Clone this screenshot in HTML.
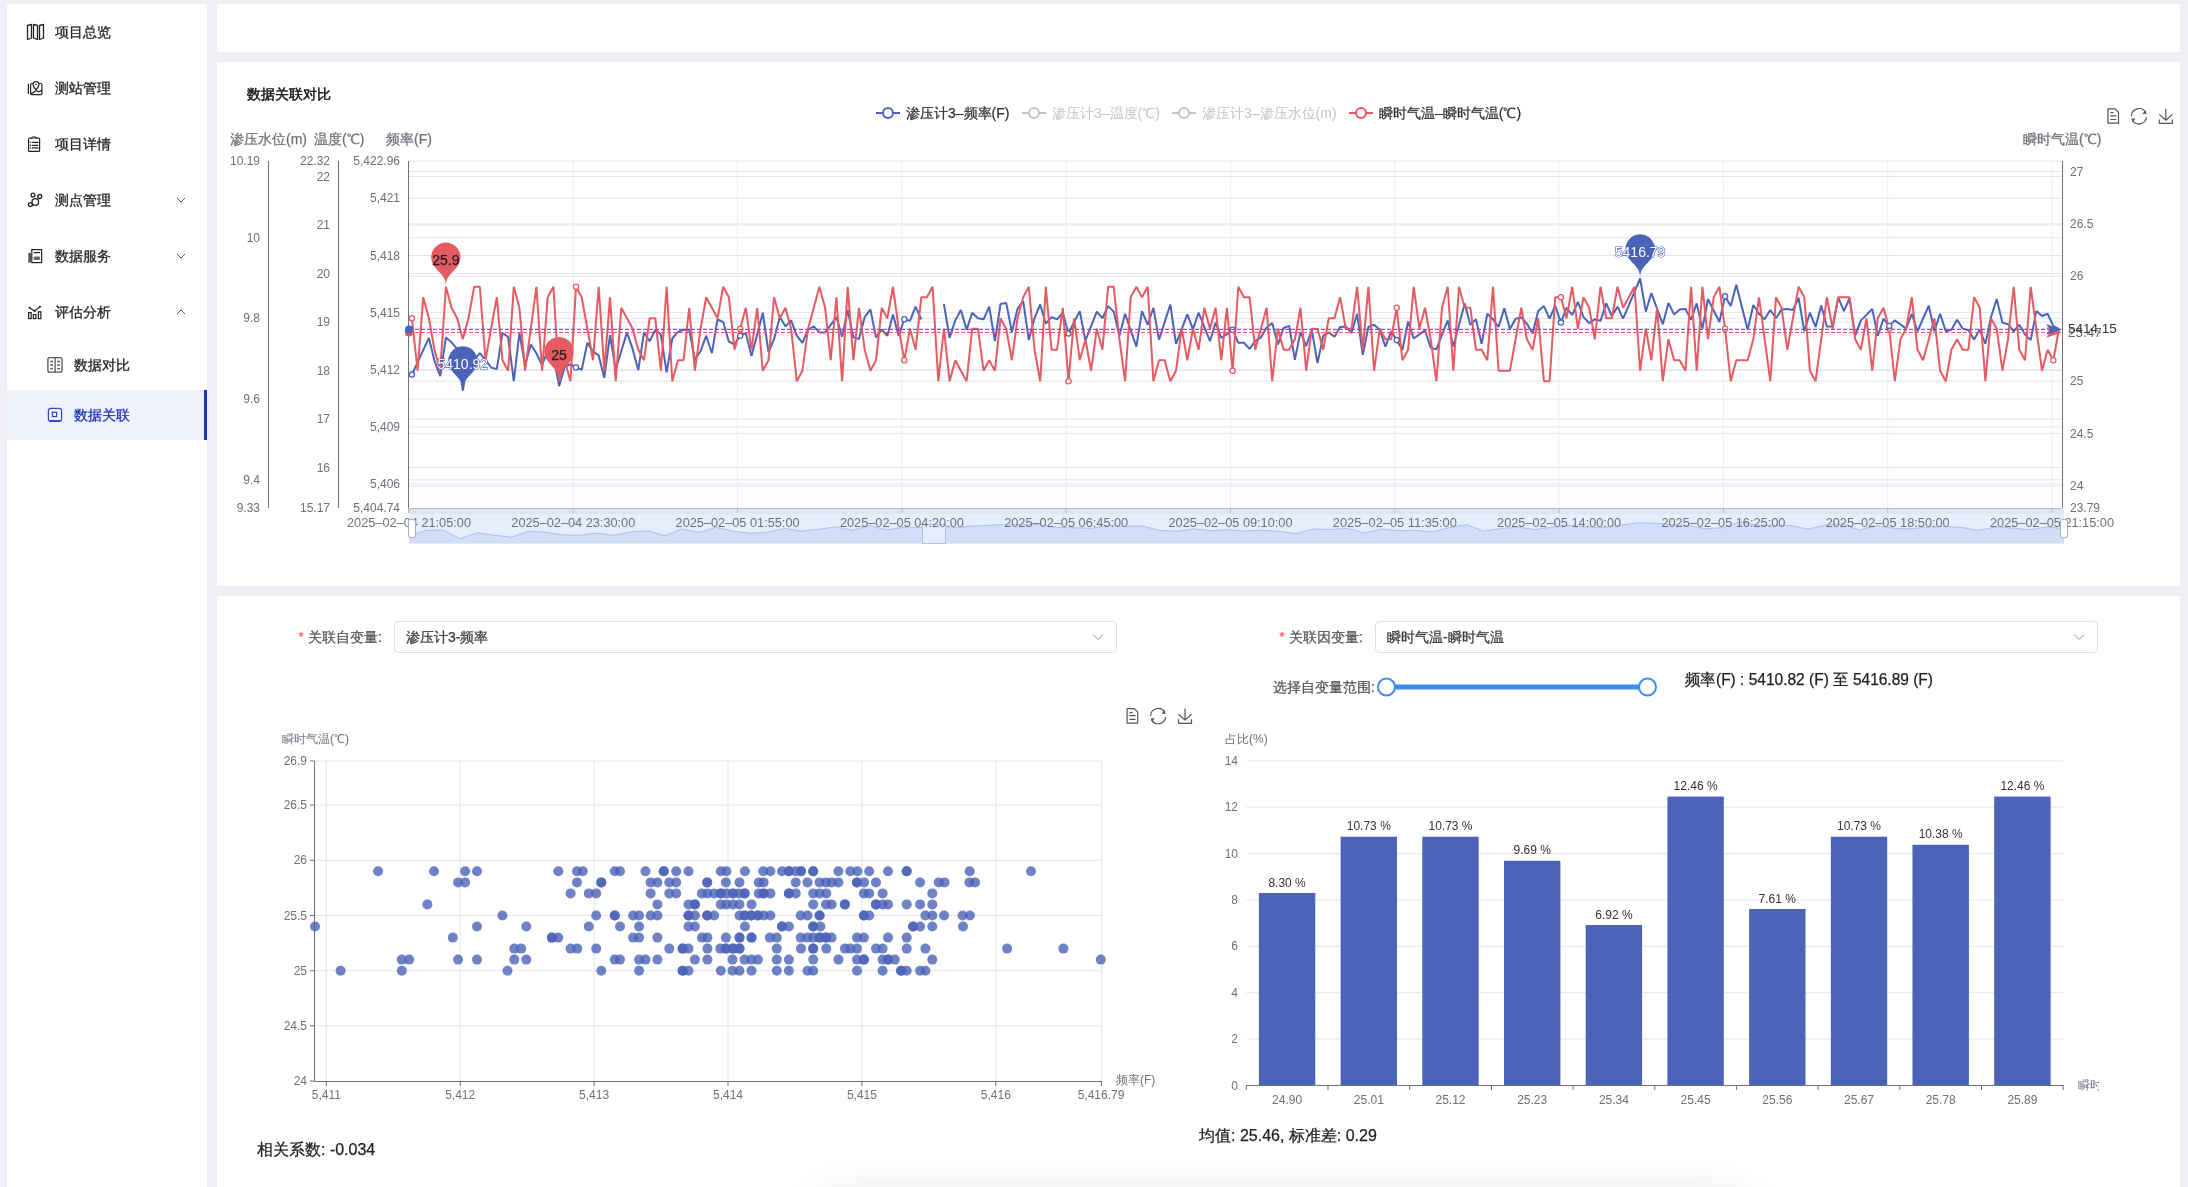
<!DOCTYPE html>
<html><head><meta charset="utf-8"><title>数据关联</title>
<style>
html,body{margin:0;padding:0}
body{width:2188px;height:1187px;overflow:hidden;background:#eef0f4;font-family:"Liberation Sans", sans-serif;position:relative}
svg{position:absolute;left:0;top:0;font-family:"Liberation Sans", sans-serif;will-change:transform}
</style></head><body>
<svg width="2188" height="1187" viewBox="0 0 2188 1187">
<rect x="7" y="4" width="200" height="1183" fill="#fff"/>
<rect x="217" y="4" width="1963" height="48" fill="#fff"/>
<rect x="217" y="62" width="1963" height="524" fill="#fff"/>
<rect x="217" y="596" width="1963" height="591" fill="#fff"/>
<rect x="7" y="390" width="200" height="50" fill="#eef2fd"/>
<rect x="204" y="390" width="3" height="50" fill="#1f33b0"/>
<text x="55.0" y="32.0" font-size="14" fill="#262626" text-anchor="start" dominant-baseline="central" stroke="#262626" stroke-width="0.3">项目总览</text>
<text x="55.0" y="88.0" font-size="14" fill="#262626" text-anchor="start" dominant-baseline="central" stroke="#262626" stroke-width="0.3">测站管理</text>
<text x="55.0" y="144.0" font-size="14" fill="#262626" text-anchor="start" dominant-baseline="central" stroke="#262626" stroke-width="0.3">项目详情</text>
<text x="55.0" y="200.0" font-size="14" fill="#262626" text-anchor="start" dominant-baseline="central" stroke="#262626" stroke-width="0.3">测点管理</text>
<path d="M177 198 L181 202 L185 198" fill="none" stroke="#555" stroke-width="1"/>
<text x="55.0" y="256.0" font-size="14" fill="#262626" text-anchor="start" dominant-baseline="central" stroke="#262626" stroke-width="0.3">数据服务</text>
<path d="M177 254 L181 258 L185 254" fill="none" stroke="#555" stroke-width="1"/>
<text x="55.0" y="312.0" font-size="14" fill="#262626" text-anchor="start" dominant-baseline="central" stroke="#262626" stroke-width="0.3">评估分析</text>
<path d="M177 314 L181 310 L185 314" fill="none" stroke="#555" stroke-width="1"/>
<text x="74.0" y="365.0" font-size="14" fill="#262626" text-anchor="start" dominant-baseline="central" stroke="#262626" stroke-width="0.3">数据对比</text>
<text x="74.0" y="415.0" font-size="14" fill="#1f30b5" text-anchor="start" dominant-baseline="central" stroke="#1f30b5" stroke-width="0.3">数据关联</text>
<g fill="none" stroke="#222" stroke-width="1.3" stroke-linejoin="round"><path d="M27.5 25.5 L31.5 24.5 L31.5 38 L27.5 39.5 Z"/><path d="M33.5 24.5 L37.5 25.5 L37.5 39.5 L33.5 38 Z"/><path d="M39.5 25.5 L43.5 24.5 L43.5 38 L39.5 39.5 Z"/></g>
<g fill="none" stroke="#222" stroke-width="1.2" stroke-linecap="round" stroke-linejoin="round"><path d="M28.4 84 V93.5"/><path d="M33 83.5 H31.8 Q30.6 83.5 30.6 84.7 V93.4 Q30.6 94.6 31.8 94.6 H40.7 Q41.9 94.6 41.9 93.4 V84.7 Q41.9 83.5 40.7 83.5 H39.6"/><path d="M36 89.8 C34.5 88 33 86.4 33 84.6 A3 3 0 0 1 39 84.6 C39 86.4 37.5 88 36 89.8 Z"/><path d="M31.2 93.8 L36.5 90.6 L38.6 92 L41.5 90.2"/></g>
<circle cx="36" cy="84.5" r="0.8" fill="#222"/>
<g fill="none" stroke="#222" stroke-width="1.2" stroke-linecap="round" stroke-linejoin="round"><rect x="28.6" y="138" width="11" height="13.4" rx="1"/><path d="M31 138.3 Q34 135.2 37 138.3"/><path d="M32.5 142.3 H38 M32.5 145.3 H38 M32.5 147.9 H38"/></g>
<g fill="#222"><circle cx="30.5" cy="142.3" r="0.7"/><circle cx="30.5" cy="145.3" r="0.7"/><circle cx="30.5" cy="147.9" r="0.7"/></g>
<g fill="none" stroke="#222" stroke-width="1.3"><circle cx="33" cy="195" r="1.9"/><circle cx="39.7" cy="196.5" r="2"/><circle cx="35.3" cy="202" r="3.3"/><circle cx="30.4" cy="204.6" r="2"/></g>
<g fill="none" stroke="#222" stroke-width="1.2"><rect x="31.8" y="249.6" width="9.8" height="13" /><path d="M33.6 252.6 H40"/></g>
<path d="M28.3 253 H31.8 V262.6 H28.3 Z" fill="#555"/><rect x="33.6" y="256.4" width="6.4" height="3.6" rx="1.2" fill="#666"/>
<g fill="none" stroke="#222" stroke-width="1.2"><rect x="28.6" y="312.6" width="2.6" height="6"/><rect x="33.3" y="314.6" width="2.6" height="4"/><rect x="38.3" y="311.8" width="2.6" height="6.8"/><path d="M29.5 307.8 L34.6 311 L40 306.8"/></g>
<g fill="#222"><circle cx="29.5" cy="307.8" r="1"/><circle cx="34.6" cy="311" r="1"/><circle cx="40" cy="306.8" r="1"/></g>
<g fill="none" stroke="#555" stroke-width="1.3"><rect x="47.9" y="357.6" width="14.2" height="14.6" rx="2"/><path d="M55.1 357.6 V372.2"/><path d="M50.2 361.5 H53 M50.2 365 H53 M50.2 368.7 H53 M57.2 361.5 H60 M57.2 365 H60 M57.2 368.7 H60"/></g>
<g fill="none" stroke="#3447c4" stroke-width="1.2"><rect x="48.4" y="408.3" width="13.2" height="13.2" rx="2.5"/><rect x="52.4" y="412.3" width="4.2" height="4.2"/><path d="M50 420.6 H60"/></g>
<text x="247.0" y="94.0" font-size="14" fill="#111" text-anchor="start" dominant-baseline="central" stroke="#111" stroke-width="0.45">数据关联对比</text>
<line x1="876.0" y1="113.0" x2="900.0" y2="113.0" stroke="#4b63b8" stroke-width="2" />
<circle cx="888" cy="113" r="5" fill="#fff" stroke="#4b63b8" stroke-width="2"/>
<text x="906.0" y="113.0" font-size="14" fill="#333" text-anchor="start" dominant-baseline="central"  stroke="#333" stroke-width="0.25">渗压计3–频率(F)</text>
<line x1="1022.0" y1="113.0" x2="1046.0" y2="113.0" stroke="#c4c4c4" stroke-width="2" />
<circle cx="1034" cy="113" r="5" fill="#fff" stroke="#c4c4c4" stroke-width="2"/>
<text x="1052.0" y="113.0" font-size="14" fill="#c4c4c4" text-anchor="start" dominant-baseline="central" >渗压计3–温度(℃)</text>
<line x1="1172.0" y1="113.0" x2="1196.0" y2="113.0" stroke="#c4c4c4" stroke-width="2" />
<circle cx="1184" cy="113" r="5" fill="#fff" stroke="#c4c4c4" stroke-width="2"/>
<text x="1202.0" y="113.0" font-size="14" fill="#c4c4c4" text-anchor="start" dominant-baseline="central" >渗压计3–渗压水位(m)</text>
<line x1="1349.0" y1="113.0" x2="1373.0" y2="113.0" stroke="#e65a62" stroke-width="2" />
<circle cx="1361" cy="113" r="5" fill="#fff" stroke="#e65a62" stroke-width="2"/>
<text x="1379.0" y="113.0" font-size="14" fill="#333" text-anchor="start" dominant-baseline="central"  stroke="#333" stroke-width="0.25">瞬时气温–瞬时气温(℃)</text>
<g fill="none" stroke="#555" stroke-width="1.2" stroke-linejoin="round"><path d="M2107.9 108.8 H2115.1000000000004 L2118.5 112.2 V123.2 H2107.9 Z"/><path d="M2110.3 112.7 H2113.6000000000004 M2110.3 115.8 H2116.3 M2110.3 119.5 H2116.3"/><path d="M2131.40 116.20 A7.6 7.6 0 0 1 2145.45 112.17"/><path d="M2146.53 117.26 A7.6 7.6 0 0 1 2132.55 120.23"/><path d="M2165.8 108.7 V120.0 M2159.3 114.4 L2165.8 120.2 L2172.3 114.4"/><path d="M2159.3 119.4 V123.4 H2172.3 V119.4"/></g>
<path d="M2145.1000000000004 109.9 L2146.6000000000004 113.8 L2142.6000000000004 114.0 Z" fill="#555"/>
<path d="M2132.9 122.5 L2131.4 118.60000000000001 L2135.4 118.4 Z" fill="#555"/>
<text x="230.0" y="139.0" font-size="14" fill="#6e7079" text-anchor="start" dominant-baseline="central"  stroke="#6e7079" stroke-width="0.25">渗压水位(m)</text>
<text x="314.0" y="139.0" font-size="14" fill="#6e7079" text-anchor="start" dominant-baseline="central"  stroke="#6e7079" stroke-width="0.25">温度(℃)</text>
<text x="386.0" y="139.0" font-size="14" fill="#6e7079" text-anchor="start" dominant-baseline="central"  stroke="#6e7079" stroke-width="0.25">频率(F)</text>
<text x="2023.0" y="139.0" font-size="14" fill="#6e7079" text-anchor="start" dominant-baseline="central"  stroke="#6e7079" stroke-width="0.25">瞬时气温(℃)</text>
<line x1="573.3" y1="161.0" x2="573.3" y2="508.0" stroke="#eeeef2" stroke-width="1" />
<line x1="737.6" y1="161.0" x2="737.6" y2="508.0" stroke="#eeeef2" stroke-width="1" />
<line x1="901.9" y1="161.0" x2="901.9" y2="508.0" stroke="#eeeef2" stroke-width="1" />
<line x1="1066.2" y1="161.0" x2="1066.2" y2="508.0" stroke="#eeeef2" stroke-width="1" />
<line x1="1230.5" y1="161.0" x2="1230.5" y2="508.0" stroke="#eeeef2" stroke-width="1" />
<line x1="1394.8" y1="161.0" x2="1394.8" y2="508.0" stroke="#eeeef2" stroke-width="1" />
<line x1="1559.1" y1="161.0" x2="1559.1" y2="508.0" stroke="#eeeef2" stroke-width="1" />
<line x1="1723.4" y1="161.0" x2="1723.4" y2="508.0" stroke="#eeeef2" stroke-width="1" />
<line x1="1887.7" y1="161.0" x2="1887.7" y2="508.0" stroke="#eeeef2" stroke-width="1" />
<line x1="2052.0" y1="161.0" x2="2052.0" y2="508.0" stroke="#eeeef2" stroke-width="1" />
<line x1="409.0" y1="161.0" x2="2062.0" y2="161.0" stroke="#e0e6f1" stroke-width="1" />
<line x1="409.0" y1="198.3" x2="2062.0" y2="198.3" stroke="#e0e6f1" stroke-width="1" />
<line x1="409.0" y1="255.5" x2="2062.0" y2="255.5" stroke="#e0e6f1" stroke-width="1" />
<line x1="409.0" y1="312.6" x2="2062.0" y2="312.6" stroke="#e0e6f1" stroke-width="1" />
<line x1="409.0" y1="369.7" x2="2062.0" y2="369.7" stroke="#e0e6f1" stroke-width="1" />
<line x1="409.0" y1="426.9" x2="2062.0" y2="426.9" stroke="#e0e6f1" stroke-width="1" />
<line x1="409.0" y1="484.0" x2="2062.0" y2="484.0" stroke="#e0e6f1" stroke-width="1" />
<line x1="409.0" y1="176.5" x2="2062.0" y2="176.5" stroke="#e0e6f1" stroke-width="1" />
<line x1="409.0" y1="225.1" x2="2062.0" y2="225.1" stroke="#e0e6f1" stroke-width="1" />
<line x1="409.0" y1="273.6" x2="2062.0" y2="273.6" stroke="#e0e6f1" stroke-width="1" />
<line x1="409.0" y1="322.1" x2="2062.0" y2="322.1" stroke="#e0e6f1" stroke-width="1" />
<line x1="409.0" y1="370.7" x2="2062.0" y2="370.7" stroke="#e0e6f1" stroke-width="1" />
<line x1="409.0" y1="419.2" x2="2062.0" y2="419.2" stroke="#e0e6f1" stroke-width="1" />
<line x1="409.0" y1="467.7" x2="2062.0" y2="467.7" stroke="#e0e6f1" stroke-width="1" />
<line x1="409.0" y1="237.7" x2="2062.0" y2="237.7" stroke="#e0e6f1" stroke-width="1" />
<line x1="409.0" y1="318.4" x2="2062.0" y2="318.4" stroke="#e0e6f1" stroke-width="1" />
<line x1="409.0" y1="399.1" x2="2062.0" y2="399.1" stroke="#e0e6f1" stroke-width="1" />
<line x1="409.0" y1="479.8" x2="2062.0" y2="479.8" stroke="#e0e6f1" stroke-width="1" />
<line x1="409.0" y1="171.5" x2="2062.0" y2="171.5" stroke="#e0e6f1" stroke-width="1" />
<line x1="409.0" y1="223.9" x2="2062.0" y2="223.9" stroke="#e0e6f1" stroke-width="1" />
<line x1="409.0" y1="276.3" x2="2062.0" y2="276.3" stroke="#e0e6f1" stroke-width="1" />
<line x1="409.0" y1="328.7" x2="2062.0" y2="328.7" stroke="#e0e6f1" stroke-width="1" />
<line x1="409.0" y1="381.2" x2="2062.0" y2="381.2" stroke="#e0e6f1" stroke-width="1" />
<line x1="409.0" y1="433.6" x2="2062.0" y2="433.6" stroke="#e0e6f1" stroke-width="1" />
<line x1="409.0" y1="486.0" x2="2062.0" y2="486.0" stroke="#e0e6f1" stroke-width="1" />
<line x1="268.5" y1="161.0" x2="268.5" y2="508.0" stroke="#6e7079" stroke-width="1" />
<line x1="338.5" y1="161.0" x2="338.5" y2="508.0" stroke="#6e7079" stroke-width="1" />
<line x1="408.5" y1="161.0" x2="408.5" y2="508.0" stroke="#6e7079" stroke-width="1" />
<line x1="2062.5" y1="161.0" x2="2062.5" y2="508.0" stroke="#6e7079" stroke-width="1" />
<text x="260.0" y="161.0" font-size="12" fill="#6e7079" text-anchor="end" dominant-baseline="central" >10.19</text>
<text x="260.0" y="237.7" font-size="12" fill="#6e7079" text-anchor="end" dominant-baseline="central" >10</text>
<text x="260.0" y="318.4" font-size="12" fill="#6e7079" text-anchor="end" dominant-baseline="central" >9.8</text>
<text x="260.0" y="399.1" font-size="12" fill="#6e7079" text-anchor="end" dominant-baseline="central" >9.6</text>
<text x="260.0" y="479.8" font-size="12" fill="#6e7079" text-anchor="end" dominant-baseline="central" >9.4</text>
<text x="260.0" y="508.0" font-size="12" fill="#6e7079" text-anchor="end" dominant-baseline="central" >9.33</text>
<text x="330.0" y="161.0" font-size="12" fill="#6e7079" text-anchor="end" dominant-baseline="central" >22.32</text>
<text x="330.0" y="176.5" font-size="12" fill="#6e7079" text-anchor="end" dominant-baseline="central" >22</text>
<text x="330.0" y="225.1" font-size="12" fill="#6e7079" text-anchor="end" dominant-baseline="central" >21</text>
<text x="330.0" y="273.6" font-size="12" fill="#6e7079" text-anchor="end" dominant-baseline="central" >20</text>
<text x="330.0" y="322.1" font-size="12" fill="#6e7079" text-anchor="end" dominant-baseline="central" >19</text>
<text x="330.0" y="370.7" font-size="12" fill="#6e7079" text-anchor="end" dominant-baseline="central" >18</text>
<text x="330.0" y="419.2" font-size="12" fill="#6e7079" text-anchor="end" dominant-baseline="central" >17</text>
<text x="330.0" y="467.7" font-size="12" fill="#6e7079" text-anchor="end" dominant-baseline="central" >16</text>
<text x="330.0" y="508.0" font-size="12" fill="#6e7079" text-anchor="end" dominant-baseline="central" >15.17</text>
<text x="400.0" y="161.0" font-size="12" fill="#6e7079" text-anchor="end" dominant-baseline="central" >5,422.96</text>
<text x="400.0" y="198.3" font-size="12" fill="#6e7079" text-anchor="end" dominant-baseline="central" >5,421</text>
<text x="400.0" y="255.5" font-size="12" fill="#6e7079" text-anchor="end" dominant-baseline="central" >5,418</text>
<text x="400.0" y="312.6" font-size="12" fill="#6e7079" text-anchor="end" dominant-baseline="central" >5,415</text>
<text x="400.0" y="369.7" font-size="12" fill="#6e7079" text-anchor="end" dominant-baseline="central" >5,412</text>
<text x="400.0" y="426.9" font-size="12" fill="#6e7079" text-anchor="end" dominant-baseline="central" >5,409</text>
<text x="400.0" y="484.0" font-size="12" fill="#6e7079" text-anchor="end" dominant-baseline="central" >5,406</text>
<text x="400.0" y="508.0" font-size="12" fill="#6e7079" text-anchor="end" dominant-baseline="central" >5,404.74</text>
<text x="2070.0" y="171.5" font-size="12" fill="#6e7079" text-anchor="start" dominant-baseline="central" >27</text>
<text x="2070.0" y="223.9" font-size="12" fill="#6e7079" text-anchor="start" dominant-baseline="central" >26.5</text>
<text x="2070.0" y="276.3" font-size="12" fill="#6e7079" text-anchor="start" dominant-baseline="central" >26</text>
<text x="2070.0" y="381.2" font-size="12" fill="#6e7079" text-anchor="start" dominant-baseline="central" >25</text>
<text x="2070.0" y="433.6" font-size="12" fill="#6e7079" text-anchor="start" dominant-baseline="central" >24.5</text>
<text x="2070.0" y="486.0" font-size="12" fill="#6e7079" text-anchor="start" dominant-baseline="central" >24</text>
<text x="2070.0" y="508.0" font-size="12" fill="#6e7079" text-anchor="start" dominant-baseline="central" >23.79</text>
<polyline points="411.9,374.6 417.6,362.4 423.2,350.1 428.9,337.9 434.5,360.9 440.2,376.2 445.9,337.4 451.5,342.3 457.2,348.9 462.8,390.5 468.5,357.6 474.2,359.8 479.8,353.2 485.5,359.8 491.1,367.5 496.8,369.1 502.5,333.0 508.1,336.8 513.8,381.2 519.4,333.0 525.1,365.0 530.8,344.5 536.4,353.2 542.1,365.3 547.7,350.0 553.4,356.0 559.1,386.1 564.7,367.0 570.4,364.2 576.0,367.5 581.7,369.7 587.4,342.8 593.0,351.6 598.7,355.4 604.3,377.9 610.0,335.2 615.7,369.7 621.3,351.0 627.0,332.4 632.6,348.9 638.3,370.2 644.0,332.4 649.6,341.2 655.3,329.7 660.9,334.6 666.6,372.4 672.3,338.5 677.9,331.9 683.6,329.7 689.2,329.7 694.9,359.8 700.6,351.0 706.2,335.7 711.9,353.2 717.5,319.3 723.2,322.0 728.9,341.7 734.5,344.5 740.2,335.7 745.8,333.0 751.5,356.0 757.2,334.4 762.8,312.7 768.5,352.1 774.1,339.0 779.8,317.1 785.5,326.4 791.1,320.4 796.8,335.7 802.4,342.8 808.1,329.7 813.8,326.4 819.4,332.4 825.1,332.4 830.7,324.8 836.4,317.1 842.1,336.8 847.7,310.0 853.4,337.4 859.0,339.0 864.7,317.1 870.4,309.4 876.0,337.4 881.7,329.7 887.3,335.7 893.0,314.4 898.7,335.7 904.3,319.3 910.0,320.9 915.6,306.7 921.3,319.3" fill="none" stroke="#4b63b8" stroke-width="2" stroke-linejoin="bevel"/>
<polyline points="943.9,304.0 949.6,337.9 955.3,320.4 960.9,310.0 966.6,329.7 972.2,312.7 977.9,318.2 983.6,319.3 989.2,306.7 994.9,341.2 1000.5,304.0 1006.2,302.9 1011.9,331.9 1017.5,308.9 1023.2,301.2 1028.8,340.1 1034.5,318.2 1040.2,304.5 1045.8,323.7 1051.5,317.1 1057.1,319.3 1062.8,312.7 1068.5,333.5 1074.1,322.3 1079.8,311.1 1085.4,340.6 1091.1,326.1 1096.8,311.6 1102.4,318.2 1108.1,306.1 1113.7,311.6 1119.4,335.7 1125.1,313.8 1130.7,330.2 1136.4,346.7 1142.0,311.1 1147.7,324.8 1153.4,307.8 1159.0,339.6 1164.7,322.1 1170.3,304.5 1176.0,343.9 1181.7,329.1 1187.3,314.4 1193.0,329.1 1198.6,312.7 1204.3,326.9 1210.0,341.2 1215.6,322.6 1221.3,337.9 1226.9,334.1 1232.6,329.7 1238.3,342.8 1243.9,342.8 1249.6,348.9 1255.2,341.2 1260.9,337.4 1266.6,327.5 1272.2,323.1 1277.9,344.5 1283.5,328.0 1289.2,325.9 1294.9,359.8 1300.5,331.9 1306.2,346.1 1311.8,329.7 1317.5,363.1 1323.2,335.7 1328.8,332.4 1334.5,336.8 1340.1,327.0 1345.8,326.4 1351.5,333.0 1357.1,313.8 1362.8,354.9 1368.4,327.0 1374.1,324.8 1379.8,329.7 1385.4,346.7 1391.1,331.3 1396.7,340.1 1402.4,350.0 1408.1,321.5 1413.7,338.5 1419.4,334.4 1425.0,330.2 1430.7,347.8 1436.4,349.4 1442.0,334.6 1447.7,320.4 1453.3,346.7 1459.0,325.0 1464.7,303.4 1470.3,324.8 1476.0,319.3 1481.6,343.9 1487.3,313.8 1493.0,319.3 1498.6,327.0 1504.3,308.3 1509.9,329.1 1515.6,318.7 1521.3,317.6 1526.9,323.7 1532.6,333.5 1538.2,311.1 1543.9,306.1 1549.6,318.7 1555.2,305.6 1560.9,322.6 1566.5,307.8 1572.2,314.9 1577.9,301.8 1583.5,317.1 1589.2,323.1 1594.8,319.3 1600.5,320.9 1606.2,303.4 1611.8,316.0 1617.5,306.7 1623.1,318.7 1628.8,305.3 1634.5,291.9 1640.1,278.5 1645.8,311.6 1651.4,293.0 1657.1,308.9 1662.8,324.2 1668.4,302.9 1674.1,314.4 1679.7,309.4 1685.4,308.9 1691.1,319.8 1696.7,303.4 1702.4,328.6 1708.0,299.0 1713.7,310.5 1719.4,322.0 1725.0,296.3 1730.7,306.1 1736.3,284.8 1742.0,307.2 1747.7,329.7 1753.3,305.0 1759.0,313.8 1764.6,319.3 1770.3,310.0 1776.0,318.2 1781.6,309.4 1787.3,308.9 1792.9,310.0 1798.6,297.9 1804.3,331.3 1809.9,312.7 1815.6,327.0 1821.2,305.6 1826.9,326.4 1832.6,326.4 1838.2,297.4 1843.9,311.1 1849.5,298.5 1855.2,335.7 1860.9,320.4 1866.5,314.9 1872.2,308.9 1877.8,335.7 1883.5,318.7 1889.2,325.9 1894.8,320.4 1900.5,324.5 1906.1,328.6 1911.8,313.8 1917.5,331.3 1923.1,318.5 1928.8,305.6 1934.4,331.3 1940.1,313.8 1945.8,331.3 1951.4,329.7 1957.1,319.8 1962.7,328.6 1968.4,330.2 1974.1,339.6 1979.7,329.7 1985.4,343.9 1991.0,317.1 1996.7,299.0 2002.4,322.6 2008.0,324.2 2013.7,331.3 2019.3,324.8 2025.0,334.6 2030.7,340.1 2036.3,311.1 2042.0,316.0 2047.6,313.8 2053.3,325.9 2059.0,329.1" fill="none" stroke="#4b63b8" stroke-width="2" stroke-linejoin="bevel"/>
<polyline points="411.9,318.3 417.6,370.7 423.2,297.3 428.9,318.3 434.5,349.7 440.2,370.7 445.9,286.8 451.5,307.8 457.2,318.3 462.8,339.2 468.5,318.3 474.2,286.8 479.8,286.8 485.5,360.2 491.1,328.7 496.8,297.3 502.5,360.2 508.1,370.7 513.8,286.8 519.4,307.8 525.1,370.7 530.8,328.7 536.4,286.8 542.1,370.7 547.7,297.3 553.4,286.8 559.1,381.2 564.7,360.2 570.4,381.2 576.0,286.8 581.7,297.3 587.4,328.7 593.0,360.2 598.7,286.8 604.3,370.7 610.0,297.3 615.7,381.2 621.3,307.8 627.0,318.3 632.6,328.7 638.3,349.7 644.0,360.2 649.6,318.3 655.3,318.3 660.9,370.7 666.6,286.8 672.3,381.2 677.9,360.2 683.6,360.2 689.2,307.8 694.9,370.7 700.6,328.7 706.2,297.3 711.9,307.8 717.5,318.3 723.2,286.8 728.9,297.3 734.5,349.7 740.2,328.7 745.8,307.8 751.5,349.7 757.2,307.8 762.8,370.7 768.5,360.2 774.1,297.3 779.8,318.3 785.5,307.8 791.1,328.7 796.8,381.2 802.4,370.7 808.1,328.7 813.8,307.8 819.4,286.8 825.1,307.8 830.7,360.2 836.4,297.3 842.1,381.2 847.7,286.8 853.4,360.2 859.0,307.8 864.7,349.7 870.4,370.7 876.0,360.2 881.7,307.8 887.3,318.3 893.0,286.8 898.7,328.7 904.3,360.2 910.0,328.7 915.6,349.7 921.3,297.3 927.0,297.3 932.6,286.8 938.3,381.2 943.9,328.7 949.6,381.2 955.3,360.2 960.9,370.7 966.6,381.2 972.2,328.7 977.9,328.7 983.6,370.7 989.2,360.2 994.9,370.7 1000.5,318.3 1006.2,328.7 1011.9,360.2 1017.5,318.3 1023.2,297.3 1028.8,286.8 1034.5,349.7 1040.2,381.2 1045.8,286.8 1051.5,349.7 1057.1,349.7 1062.8,307.8 1068.5,381.2 1074.1,318.3 1079.8,360.2 1085.4,339.2 1091.1,370.7 1096.8,328.7 1102.4,349.7 1108.1,286.8 1113.7,286.8 1119.4,339.2 1125.1,381.2 1130.7,297.3 1136.4,286.8 1142.0,297.3 1147.7,286.8 1153.4,381.2 1159.0,360.2 1164.7,360.2 1170.3,381.2 1176.0,370.7 1181.7,328.7 1187.3,360.2 1193.0,328.7 1198.6,349.7 1204.3,307.8 1210.0,328.7 1215.6,307.8 1221.3,360.2 1226.9,307.8 1232.6,370.7 1238.3,286.8 1243.9,297.3 1249.6,297.3 1255.2,349.7 1260.9,328.7 1266.6,307.8 1272.2,381.2 1277.9,328.7 1283.5,349.7 1289.2,349.7 1294.9,339.2 1300.5,307.8 1306.2,370.7 1311.8,328.7 1317.5,328.7 1323.2,349.7 1328.8,318.3 1334.5,318.3 1340.1,297.3 1345.8,328.7 1351.5,328.7 1357.1,286.8 1362.8,349.7 1368.4,286.8 1374.1,370.7 1379.8,328.7 1385.4,339.2 1391.1,339.2 1396.7,307.8 1402.4,360.2 1408.1,349.7 1413.7,286.8 1419.4,328.7 1425.0,307.8 1430.7,339.2 1436.4,381.2 1442.0,307.8 1447.7,286.8 1453.3,370.7 1459.0,286.8 1464.7,307.8 1470.3,307.8 1476.0,349.7 1481.6,349.7 1487.3,360.2 1493.0,286.8 1498.6,370.7 1504.3,370.7 1509.9,370.7 1515.6,339.2 1521.3,307.8 1526.9,339.2 1532.6,349.7 1538.2,318.3 1543.9,381.2 1549.6,381.2 1555.2,297.3 1560.9,297.3 1566.5,318.3 1572.2,286.8 1577.9,328.7 1583.5,297.3 1589.2,307.8 1594.8,339.2 1600.5,286.8 1606.2,318.3 1611.8,318.3 1617.5,286.8 1623.1,307.8 1628.8,297.3 1634.5,286.8 1640.1,370.7 1645.8,328.7 1651.4,360.2 1657.1,307.8 1662.8,381.2 1668.4,339.2 1674.1,360.2 1679.7,360.2 1685.4,370.7 1691.1,286.8 1696.7,370.7 1702.4,286.8 1708.0,339.2 1713.7,297.3 1719.4,286.8 1725.0,328.7 1730.7,381.2 1736.3,360.2 1742.0,360.2 1747.7,360.2 1753.3,339.2 1759.0,297.3 1764.6,339.2 1770.3,381.2 1776.0,297.3 1781.6,307.8 1787.3,349.7 1792.9,318.3 1798.6,286.8 1804.3,297.3 1809.9,370.7 1815.6,381.2 1821.2,339.2 1826.9,297.3 1832.6,328.7 1838.2,297.3 1843.9,297.3 1849.5,297.3 1855.2,339.2 1860.9,349.7 1866.5,318.3 1872.2,370.7 1877.8,318.3 1883.5,307.8 1889.2,328.7 1894.8,381.2 1900.5,339.2 1906.1,328.7 1911.8,297.3 1917.5,349.7 1923.1,360.2 1928.8,339.2 1934.4,318.3 1940.1,370.7 1945.8,381.2 1951.4,349.7 1957.1,339.2 1962.7,349.7 1968.4,349.7 1974.1,297.3 1979.7,307.8 1985.4,381.2 1991.0,318.3 1996.7,328.7 2002.4,370.7 2008.0,339.2 2013.7,286.8 2019.3,349.7 2025.0,360.2 2030.7,286.8 2036.3,328.7 2042.0,370.7 2047.6,349.7 2053.3,360.2 2059.0,328.7" fill="none" stroke="#e65a62" stroke-width="2" stroke-linejoin="bevel"/>
<circle cx="411.9" cy="318.3" r="2.6" fill="#fff" stroke="#e65a62" stroke-width="1.3"/>
<circle cx="411.9" cy="374.6" r="2.6" fill="#fff" stroke="#4b63b8" stroke-width="1.3"/>
<circle cx="576.0" cy="286.8" r="2.6" fill="#fff" stroke="#e65a62" stroke-width="1.3"/>
<circle cx="576.0" cy="367.5" r="2.6" fill="#fff" stroke="#4b63b8" stroke-width="1.3"/>
<circle cx="740.2" cy="328.7" r="2.6" fill="#fff" stroke="#e65a62" stroke-width="1.3"/>
<circle cx="740.2" cy="335.7" r="2.6" fill="#fff" stroke="#4b63b8" stroke-width="1.3"/>
<circle cx="904.3" cy="360.2" r="2.6" fill="#fff" stroke="#e65a62" stroke-width="1.3"/>
<circle cx="904.3" cy="319.3" r="2.6" fill="#fff" stroke="#4b63b8" stroke-width="1.3"/>
<circle cx="1068.5" cy="381.2" r="2.6" fill="#fff" stroke="#e65a62" stroke-width="1.3"/>
<circle cx="1068.5" cy="333.5" r="2.6" fill="#fff" stroke="#4b63b8" stroke-width="1.3"/>
<circle cx="1232.6" cy="370.7" r="2.6" fill="#fff" stroke="#e65a62" stroke-width="1.3"/>
<circle cx="1232.6" cy="329.7" r="2.6" fill="#fff" stroke="#4b63b8" stroke-width="1.3"/>
<circle cx="1396.7" cy="307.8" r="2.6" fill="#fff" stroke="#e65a62" stroke-width="1.3"/>
<circle cx="1396.7" cy="340.1" r="2.6" fill="#fff" stroke="#4b63b8" stroke-width="1.3"/>
<circle cx="1560.9" cy="297.3" r="2.6" fill="#fff" stroke="#e65a62" stroke-width="1.3"/>
<circle cx="1560.9" cy="322.6" r="2.6" fill="#fff" stroke="#4b63b8" stroke-width="1.3"/>
<circle cx="1725.0" cy="328.7" r="2.6" fill="#fff" stroke="#e65a62" stroke-width="1.3"/>
<circle cx="1725.0" cy="296.3" r="2.6" fill="#fff" stroke="#4b63b8" stroke-width="1.3"/>
<circle cx="1889.2" cy="328.7" r="2.6" fill="#fff" stroke="#e65a62" stroke-width="1.3"/>
<circle cx="1889.2" cy="325.9" r="2.6" fill="#fff" stroke="#4b63b8" stroke-width="1.3"/>
<circle cx="2053.3" cy="360.2" r="2.6" fill="#fff" stroke="#e65a62" stroke-width="1.3"/>
<line x1="409.0" y1="332.5" x2="2052.0" y2="332.5" stroke="#e65a62" stroke-width="1" stroke-dasharray="4,2"/>
<line x1="409.0" y1="329.4" x2="2052.0" y2="329.4" stroke="#4b63b8" stroke-width="1" stroke-dasharray="4,2"/>
<circle cx="409" cy="332.5" r="4" fill="#e65a62"/>
<circle cx="409" cy="329.4" r="4" fill="#4b63b8"/>
<path d="M2062 332.5 L2046 337.8 L2050 332.5 L2046 327.1 Z" fill="#e65a62"/>
<path d="M2062 329.4 L2046 334.7 L2050 329.4 L2046 324.1 Z" fill="#4b63b8"/>
<text x="2068.0" y="332.5" font-size="13.5" fill="#666" text-anchor="start" dominant-baseline="central" >25.47</text>
<text x="2068.0" y="328.9" font-size="13.5" fill="#333" text-anchor="start" dominant-baseline="central" >5414.15</text>
<path d="M432.58 263.60 A14.70 14.70 0 1 1 459.14 263.60 C455.36 271.57 445.86 275.01 445.86 285.30 C445.86 275.01 436.36 271.57 432.58 263.60 Z" fill="#e65a62"/>
<text x="445.9" y="260.3" font-size="14" fill="#222" text-anchor="middle" dominant-baseline="central"  stroke="#222" stroke-width="0.25">25.9</text>
<path d="M449.56 367.30 A14.70 14.70 0 1 1 476.12 367.30 C472.34 375.27 462.84 378.71 462.84 389.00 C462.84 378.71 453.34 375.27 449.56 367.30 Z" fill="#4b63b8"/>
<text x="462.8" y="364.0" font-size="14" fill="#fff" text-anchor="middle" dominant-baseline="central" stroke="#4b63b8" stroke-width="1.2" paint-order="stroke">5410.92</text>
<path d="M545.78 357.95 A14.70 14.70 0 1 1 572.34 357.95 C568.56 365.92 559.06 369.36 559.06 379.65 C559.06 369.36 549.56 365.92 545.78 357.95 Z" fill="#e65a62"/>
<text x="559.1" y="354.7" font-size="14" fill="#222" text-anchor="middle" dominant-baseline="central"  stroke="#222" stroke-width="0.25">25</text>
<path d="M1626.84 255.30 A14.70 14.70 0 1 1 1653.40 255.30 C1649.62 263.27 1640.12 266.71 1640.12 277.00 C1640.12 266.71 1630.62 263.27 1626.84 255.30 Z" fill="#4b63b8"/>
<text x="1640.1" y="252.0" font-size="14" fill="#fff" text-anchor="middle" dominant-baseline="central" stroke="#4b63b8" stroke-width="1.2" paint-order="stroke">5416.79</text>
<line x1="409.0" y1="508.5" x2="2062.0" y2="508.5" stroke="#6e7079" stroke-width="1" />
<line x1="409.0" y1="508.0" x2="409.0" y2="513.0" stroke="#6e7079" stroke-width="1" />
<line x1="573.3" y1="508.0" x2="573.3" y2="513.0" stroke="#6e7079" stroke-width="1" />
<line x1="737.6" y1="508.0" x2="737.6" y2="513.0" stroke="#6e7079" stroke-width="1" />
<line x1="901.9" y1="508.0" x2="901.9" y2="513.0" stroke="#6e7079" stroke-width="1" />
<line x1="1066.2" y1="508.0" x2="1066.2" y2="513.0" stroke="#6e7079" stroke-width="1" />
<line x1="1230.5" y1="508.0" x2="1230.5" y2="513.0" stroke="#6e7079" stroke-width="1" />
<line x1="1394.8" y1="508.0" x2="1394.8" y2="513.0" stroke="#6e7079" stroke-width="1" />
<line x1="1559.1" y1="508.0" x2="1559.1" y2="513.0" stroke="#6e7079" stroke-width="1" />
<line x1="1723.4" y1="508.0" x2="1723.4" y2="513.0" stroke="#6e7079" stroke-width="1" />
<line x1="1887.7" y1="508.0" x2="1887.7" y2="513.0" stroke="#6e7079" stroke-width="1" />
<line x1="2052.0" y1="508.0" x2="2052.0" y2="513.0" stroke="#6e7079" stroke-width="1" />
<rect x="409" y="508" width="1655" height="6" fill="#d2dbee" fill-opacity="0.72"/>
<rect x="409" y="514" width="1655" height="29.5" fill="#e6edfc"/>
<polygon points="409,543.5 409.0,536.1 426.1,530.3 443.1,530.2 460.2,538.7 477.2,532.7 494.3,535.3 511.4,537.2 528.4,531.3 545.5,532.2 562.6,534.9 579.6,535.4 596.7,533.1 613.7,535.4 630.8,532.0 647.9,530.8 664.9,535.8 682.0,529.0 699.1,532.4 716.1,527.3 733.2,531.3 750.2,533.2 767.3,532.5 784.4,528.4 801.4,531.1 818.5,529.4 835.5,526.9 852.6,530.2 869.7,525.7 886.7,529.9 903.8,527.3 920.9,527.3 937.9,525.4 955.0,527.5 972.0,526.2 989.1,525.3 1006.2,524.7 1023.2,524.4 1040.3,524.9 1057.4,527.3 1074.4,527.8 1091.5,528.4 1108.5,525.2 1125.6,526.4 1142.7,526.0 1159.7,530.5 1176.8,531.2 1193.8,528.9 1210.9,530.8 1228.0,529.7 1245.0,531.1 1262.1,530.2 1279.2,531.3 1296.2,533.8 1313.3,529.0 1330.3,529.4 1347.4,528.4 1364.5,533.0 1381.5,529.0 1398.6,530.6 1415.6,530.4 1432.7,531.9 1449.8,527.5 1466.8,524.7 1483.9,531.2 1501.0,528.5 1518.0,527.2 1535.1,529.6 1552.1,527.2 1569.2,525.4 1586.3,526.9 1603.3,527.5 1620.4,525.3 1637.5,522.9 1654.5,523.1 1671.6,524.7 1688.6,525.6 1705.7,528.8 1722.8,527.7 1739.8,521.8 1756.9,525.0 1773.9,525.8 1791.0,525.6 1808.1,529.2 1825.1,525.1 1842.2,523.8 1859.3,529.9 1876.3,525.6 1893.4,528.3 1910.4,528.8 1927.5,527.1 1944.6,526.4 1961.6,527.4 1978.7,530.5 1995.8,526.9 2012.8,528.1 2029.9,529.7 2046.9,526.8 2064.0,528.9 2064,543.5" fill="#d3def8"/>
<polyline points="409.0,536.1 426.1,530.3 443.1,530.2 460.2,538.7 477.2,532.7 494.3,535.3 511.4,537.2 528.4,531.3 545.5,532.2 562.6,534.9 579.6,535.4 596.7,533.1 613.7,535.4 630.8,532.0 647.9,530.8 664.9,535.8 682.0,529.0 699.1,532.4 716.1,527.3 733.2,531.3 750.2,533.2 767.3,532.5 784.4,528.4 801.4,531.1 818.5,529.4 835.5,526.9 852.6,530.2 869.7,525.7 886.7,529.9 903.8,527.3 920.9,527.3 937.9,525.4 955.0,527.5 972.0,526.2 989.1,525.3 1006.2,524.7 1023.2,524.4 1040.3,524.9 1057.4,527.3 1074.4,527.8 1091.5,528.4 1108.5,525.2 1125.6,526.4 1142.7,526.0 1159.7,530.5 1176.8,531.2 1193.8,528.9 1210.9,530.8 1228.0,529.7 1245.0,531.1 1262.1,530.2 1279.2,531.3 1296.2,533.8 1313.3,529.0 1330.3,529.4 1347.4,528.4 1364.5,533.0 1381.5,529.0 1398.6,530.6 1415.6,530.4 1432.7,531.9 1449.8,527.5 1466.8,524.7 1483.9,531.2 1501.0,528.5 1518.0,527.2 1535.1,529.6 1552.1,527.2 1569.2,525.4 1586.3,526.9 1603.3,527.5 1620.4,525.3 1637.5,522.9 1654.5,523.1 1671.6,524.7 1688.6,525.6 1705.7,528.8 1722.8,527.7 1739.8,521.8 1756.9,525.0 1773.9,525.8 1791.0,525.6 1808.1,529.2 1825.1,525.1 1842.2,523.8 1859.3,529.9 1876.3,525.6 1893.4,528.3 1910.4,528.8 1927.5,527.1 1944.6,526.4 1961.6,527.4 1978.7,530.5 1995.8,526.9 2012.8,528.1 2029.9,529.7 2046.9,526.8 2064.0,528.9" fill="none" stroke="#a9c0f2" stroke-width="1"/>
<rect x="922.5" y="524.5" width="23" height="19" fill="#e6edfc" stroke="#a9c0f2" stroke-width="1"/>
<text x="409.0" y="522.5" font-size="12" fill="#6e7079" text-anchor="middle" dominant-baseline="central" textLength="124" lengthAdjust="spacingAndGlyphs">2025–02–04 21:05:00</text>
<text x="573.3" y="522.5" font-size="12" fill="#6e7079" text-anchor="middle" dominant-baseline="central" textLength="124" lengthAdjust="spacingAndGlyphs">2025–02–04 23:30:00</text>
<text x="737.6" y="522.5" font-size="12" fill="#6e7079" text-anchor="middle" dominant-baseline="central" textLength="124" lengthAdjust="spacingAndGlyphs">2025–02–05 01:55:00</text>
<text x="901.9" y="522.5" font-size="12" fill="#6e7079" text-anchor="middle" dominant-baseline="central" textLength="124" lengthAdjust="spacingAndGlyphs">2025–02–05 04:20:00</text>
<text x="1066.2" y="522.5" font-size="12" fill="#6e7079" text-anchor="middle" dominant-baseline="central" textLength="124" lengthAdjust="spacingAndGlyphs">2025–02–05 06:45:00</text>
<text x="1230.5" y="522.5" font-size="12" fill="#6e7079" text-anchor="middle" dominant-baseline="central" textLength="124" lengthAdjust="spacingAndGlyphs">2025–02–05 09:10:00</text>
<text x="1394.8" y="522.5" font-size="12" fill="#6e7079" text-anchor="middle" dominant-baseline="central" textLength="124" lengthAdjust="spacingAndGlyphs">2025–02–05 11:35:00</text>
<text x="1559.1" y="522.5" font-size="12" fill="#6e7079" text-anchor="middle" dominant-baseline="central" textLength="124" lengthAdjust="spacingAndGlyphs">2025–02–05 14:00:00</text>
<text x="1723.4" y="522.5" font-size="12" fill="#6e7079" text-anchor="middle" dominant-baseline="central" textLength="124" lengthAdjust="spacingAndGlyphs">2025–02–05 16:25:00</text>
<text x="1887.7" y="522.5" font-size="12" fill="#6e7079" text-anchor="middle" dominant-baseline="central" textLength="124" lengthAdjust="spacingAndGlyphs">2025–02–05 18:50:00</text>
<text x="2052.0" y="522.5" font-size="12" fill="#6e7079" text-anchor="middle" dominant-baseline="central" textLength="124" lengthAdjust="spacingAndGlyphs">2025–02–05 21:15:00</text>
<rect x="408.5" y="519.5" width="7" height="18" rx="2" fill="#fff" stroke="#a5acb8" stroke-width="1"/>
<rect x="2060.5" y="519.5" width="7" height="18" rx="2" fill="#fff" stroke="#a5acb8" stroke-width="1"/>
<text x="298.5" y="636.0" font-size="13" fill="#f56c6c" text-anchor="start" dominant-baseline="central" stroke="#f56c6c" stroke-width="0.4">*</text>
<text x="308.0" y="637.0" font-size="14" fill="#555" text-anchor="start" dominant-baseline="central"  stroke="#555" stroke-width="0.25">关联自变量:</text>
<rect x="394.5" y="621.5" width="722" height="31" rx="4" fill="#fff" stroke="#dcdfe6"/>
<text x="406.0" y="637.0" font-size="14" fill="#3a3a3a" text-anchor="start" dominant-baseline="central"  stroke="#3a3a3a" stroke-width="0.25">渗压计3-频率</text>
<path d="M1093 634.5 L1098 639.5 L1103 634.5" fill="none" stroke="#999" stroke-width="1"/>
<text x="1279.5" y="636.0" font-size="13" fill="#f56c6c" text-anchor="start" dominant-baseline="central" stroke="#f56c6c" stroke-width="0.4">*</text>
<text x="1289.0" y="637.0" font-size="14" fill="#555" text-anchor="start" dominant-baseline="central"  stroke="#555" stroke-width="0.25">关联因变量:</text>
<rect x="1375.5" y="621.5" width="722" height="31" rx="4" fill="#fff" stroke="#dcdfe6"/>
<text x="1387.0" y="637.0" font-size="14" fill="#3a3a3a" text-anchor="start" dominant-baseline="central"  stroke="#3a3a3a" stroke-width="0.25">瞬时气温-瞬时气温</text>
<path d="M2074 634.5 L2079 639.5 L2084 634.5" fill="none" stroke="#999" stroke-width="1"/>
<text x="1273.0" y="687.0" font-size="14" fill="#555" text-anchor="start" dominant-baseline="central"  stroke="#555" stroke-width="0.25">选择自变量范围:</text>
<rect x="1386" y="684.5" width="262" height="5" rx="2.5" fill="#3f8cf0"/>
<circle cx="1386.5" cy="687" r="8.5" fill="#fff" stroke="#3f8cf0" stroke-width="2"/>
<circle cx="1647.5" cy="687" r="8.5" fill="#fff" stroke="#3f8cf0" stroke-width="2"/>
<text x="1685.0" y="679.0" font-size="16" fill="#222" text-anchor="start" dominant-baseline="central" textLength="248" lengthAdjust="spacingAndGlyphs" stroke="#222" stroke-width="0.25">频率(F) : 5410.82 (F) 至 5416.89 (F)</text>
<g fill="none" stroke="#555" stroke-width="1.2" stroke-linejoin="round"><path d="M1127.1 708.7 H1134.3 L1137.7 712.1 V723.1 H1127.1 Z"/><path d="M1129.5 712.6 H1132.8 M1129.5 715.7 H1135.5 M1129.5 719.4 H1135.5"/><path d="M1150.60 716.10 A7.6 7.6 0 0 1 1164.65 712.07"/><path d="M1165.73 717.16 A7.6 7.6 0 0 1 1151.75 720.13"/><path d="M1185.0 708.6 V719.9 M1178.5 714.3000000000001 L1185.0 720.1 L1191.5 714.3000000000001"/><path d="M1178.5 719.3000000000001 V723.3000000000001 H1191.5 V719.3000000000001"/></g>
<path d="M1164.3 709.8000000000001 L1165.8 713.7 L1161.8 713.9 Z" fill="#555"/>
<path d="M1152.1 722.4 L1150.6 718.5 L1154.6 718.3000000000001 Z" fill="#555"/>
<text x="282.0" y="739.0" font-size="12" fill="#6e7079" text-anchor="start" dominant-baseline="central" >瞬时气温(℃)</text>
<line x1="326.3" y1="761.0" x2="326.3" y2="1081.0" stroke="#e0e6f1" stroke-width="1" />
<line x1="460.2" y1="761.0" x2="460.2" y2="1081.0" stroke="#e0e6f1" stroke-width="1" />
<line x1="594.1" y1="761.0" x2="594.1" y2="1081.0" stroke="#e0e6f1" stroke-width="1" />
<line x1="728.0" y1="761.0" x2="728.0" y2="1081.0" stroke="#e0e6f1" stroke-width="1" />
<line x1="861.9" y1="761.0" x2="861.9" y2="1081.0" stroke="#e0e6f1" stroke-width="1" />
<line x1="995.8" y1="761.0" x2="995.8" y2="1081.0" stroke="#e0e6f1" stroke-width="1" />
<line x1="1101.6" y1="761.0" x2="1101.6" y2="1081.0" stroke="#e0e6f1" stroke-width="1" />
<line x1="315.0" y1="761.0" x2="1101.6" y2="761.0" stroke="#e0e6f1" stroke-width="1" />
<line x1="315.0" y1="805.1" x2="1101.6" y2="805.1" stroke="#e0e6f1" stroke-width="1" />
<line x1="315.0" y1="860.3" x2="1101.6" y2="860.3" stroke="#e0e6f1" stroke-width="1" />
<line x1="315.0" y1="915.5" x2="1101.6" y2="915.5" stroke="#e0e6f1" stroke-width="1" />
<line x1="315.0" y1="970.7" x2="1101.6" y2="970.7" stroke="#e0e6f1" stroke-width="1" />
<line x1="315.0" y1="1025.8" x2="1101.6" y2="1025.8" stroke="#e0e6f1" stroke-width="1" />
<text x="307.0" y="761.0" font-size="12" fill="#6e7079" text-anchor="end" dominant-baseline="central" >26.9</text>
<line x1="310.0" y1="761.0" x2="315.0" y2="761.0" stroke="#6e7079" stroke-width="1" />
<text x="307.0" y="805.1" font-size="12" fill="#6e7079" text-anchor="end" dominant-baseline="central" >26.5</text>
<line x1="310.0" y1="805.1" x2="315.0" y2="805.1" stroke="#6e7079" stroke-width="1" />
<text x="307.0" y="860.3" font-size="12" fill="#6e7079" text-anchor="end" dominant-baseline="central" >26</text>
<line x1="310.0" y1="860.3" x2="315.0" y2="860.3" stroke="#6e7079" stroke-width="1" />
<text x="307.0" y="915.5" font-size="12" fill="#6e7079" text-anchor="end" dominant-baseline="central" >25.5</text>
<line x1="310.0" y1="915.5" x2="315.0" y2="915.5" stroke="#6e7079" stroke-width="1" />
<text x="307.0" y="970.7" font-size="12" fill="#6e7079" text-anchor="end" dominant-baseline="central" >25</text>
<line x1="310.0" y1="970.7" x2="315.0" y2="970.7" stroke="#6e7079" stroke-width="1" />
<text x="307.0" y="1025.8" font-size="12" fill="#6e7079" text-anchor="end" dominant-baseline="central" >24.5</text>
<line x1="310.0" y1="1025.8" x2="315.0" y2="1025.8" stroke="#6e7079" stroke-width="1" />
<text x="307.0" y="1081.0" font-size="12" fill="#6e7079" text-anchor="end" dominant-baseline="central" >24</text>
<line x1="310.0" y1="1081.0" x2="315.0" y2="1081.0" stroke="#6e7079" stroke-width="1" />
<line x1="314.5" y1="761.0" x2="314.5" y2="1081.5" stroke="#6e7079" stroke-width="1" />
<line x1="315.0" y1="1081.5" x2="1101.6" y2="1081.5" stroke="#6e7079" stroke-width="1" />
<line x1="326.3" y1="1081.0" x2="326.3" y2="1086.0" stroke="#6e7079" stroke-width="1" />
<text x="326.3" y="1094.5" font-size="12" fill="#6e7079" text-anchor="middle" dominant-baseline="central" >5,411</text>
<line x1="460.2" y1="1081.0" x2="460.2" y2="1086.0" stroke="#6e7079" stroke-width="1" />
<text x="460.2" y="1094.5" font-size="12" fill="#6e7079" text-anchor="middle" dominant-baseline="central" >5,412</text>
<line x1="594.1" y1="1081.0" x2="594.1" y2="1086.0" stroke="#6e7079" stroke-width="1" />
<text x="594.1" y="1094.5" font-size="12" fill="#6e7079" text-anchor="middle" dominant-baseline="central" >5,413</text>
<line x1="728.0" y1="1081.0" x2="728.0" y2="1086.0" stroke="#6e7079" stroke-width="1" />
<text x="728.0" y="1094.5" font-size="12" fill="#6e7079" text-anchor="middle" dominant-baseline="central" >5,414</text>
<line x1="861.9" y1="1081.0" x2="861.9" y2="1086.0" stroke="#6e7079" stroke-width="1" />
<text x="861.9" y="1094.5" font-size="12" fill="#6e7079" text-anchor="middle" dominant-baseline="central" >5,415</text>
<line x1="995.8" y1="1081.0" x2="995.8" y2="1086.0" stroke="#6e7079" stroke-width="1" />
<text x="995.8" y="1094.5" font-size="12" fill="#6e7079" text-anchor="middle" dominant-baseline="central" >5,416</text>
<text x="1101.0" y="1094.5" font-size="12" fill="#6e7079" text-anchor="middle" dominant-baseline="central" >5,416.79</text>
<line x1="1101.5" y1="1081.0" x2="1101.5" y2="1086.0" stroke="#6e7079" stroke-width="1" />
<text x="1116.0" y="1080.0" font-size="12" fill="#6e7079" text-anchor="start" dominant-baseline="central" >频率(F)</text>
<g fill="#4b63b8" fill-opacity="0.8">
<circle cx="378.1" cy="871.3" r="5"/>
<circle cx="434.0" cy="871.3" r="5"/>
<circle cx="465.1" cy="871.3" r="5"/>
<circle cx="477.0" cy="871.3" r="5"/>
<circle cx="558.3" cy="871.3" r="5"/>
<circle cx="577.0" cy="871.3" r="5"/>
<circle cx="582.8" cy="871.3" r="5"/>
<circle cx="614.8" cy="871.3" r="5"/>
<circle cx="620.0" cy="871.3" r="5"/>
<circle cx="645.5" cy="871.3" r="5"/>
<circle cx="663.8" cy="871.3" r="5"/>
<circle cx="663.8" cy="871.3" r="5"/>
<circle cx="676.2" cy="871.3" r="5"/>
<circle cx="688.5" cy="871.3" r="5"/>
<circle cx="720.8" cy="871.3" r="5"/>
<circle cx="726.4" cy="871.3" r="5"/>
<circle cx="744.9" cy="871.3" r="5"/>
<circle cx="763.3" cy="871.3" r="5"/>
<circle cx="770.4" cy="871.3" r="5"/>
<circle cx="782.0" cy="871.3" r="5"/>
<circle cx="788.9" cy="871.3" r="5"/>
<circle cx="788.9" cy="871.3" r="5"/>
<circle cx="795.7" cy="871.3" r="5"/>
<circle cx="801.0" cy="871.3" r="5"/>
<circle cx="801.0" cy="871.3" r="5"/>
<circle cx="813.2" cy="871.3" r="5"/>
<circle cx="813.2" cy="871.3" r="5"/>
<circle cx="838.4" cy="871.3" r="5"/>
<circle cx="850.3" cy="871.3" r="5"/>
<circle cx="857.3" cy="871.3" r="5"/>
<circle cx="869.2" cy="871.3" r="5"/>
<circle cx="888.0" cy="871.3" r="5"/>
<circle cx="906.7" cy="871.3" r="5"/>
<circle cx="906.7" cy="871.3" r="5"/>
<circle cx="969.7" cy="871.3" r="5"/>
<circle cx="1031.0" cy="871.3" r="5"/>
<circle cx="458.1" cy="882.4" r="5"/>
<circle cx="465.1" cy="882.4" r="5"/>
<circle cx="577.0" cy="882.4" r="5"/>
<circle cx="601.3" cy="882.4" r="5"/>
<circle cx="601.3" cy="882.4" r="5"/>
<circle cx="650.6" cy="882.4" r="5"/>
<circle cx="657.4" cy="882.4" r="5"/>
<circle cx="669.3" cy="882.4" r="5"/>
<circle cx="676.2" cy="882.4" r="5"/>
<circle cx="707.2" cy="882.4" r="5"/>
<circle cx="707.2" cy="882.4" r="5"/>
<circle cx="725.9" cy="882.4" r="5"/>
<circle cx="739.5" cy="882.4" r="5"/>
<circle cx="758.8" cy="882.4" r="5"/>
<circle cx="763.6" cy="882.4" r="5"/>
<circle cx="795.7" cy="882.4" r="5"/>
<circle cx="807.5" cy="882.4" r="5"/>
<circle cx="819.6" cy="882.4" r="5"/>
<circle cx="826.0" cy="882.4" r="5"/>
<circle cx="831.6" cy="882.4" r="5"/>
<circle cx="838.4" cy="882.4" r="5"/>
<circle cx="857.0" cy="882.4" r="5"/>
<circle cx="857.0" cy="882.4" r="5"/>
<circle cx="864.1" cy="882.4" r="5"/>
<circle cx="876.0" cy="882.4" r="5"/>
<circle cx="920.1" cy="882.4" r="5"/>
<circle cx="938.7" cy="882.4" r="5"/>
<circle cx="944.6" cy="882.4" r="5"/>
<circle cx="969.4" cy="882.4" r="5"/>
<circle cx="975.1" cy="882.4" r="5"/>
<circle cx="570.6" cy="893.4" r="5"/>
<circle cx="588.8" cy="893.4" r="5"/>
<circle cx="596.2" cy="893.4" r="5"/>
<circle cx="650.6" cy="893.4" r="5"/>
<circle cx="669.3" cy="893.4" r="5"/>
<circle cx="676.2" cy="893.4" r="5"/>
<circle cx="701.9" cy="893.4" r="5"/>
<circle cx="707.4" cy="893.4" r="5"/>
<circle cx="714.1" cy="893.4" r="5"/>
<circle cx="720.8" cy="893.4" r="5"/>
<circle cx="720.8" cy="893.4" r="5"/>
<circle cx="726.4" cy="893.4" r="5"/>
<circle cx="733.0" cy="893.4" r="5"/>
<circle cx="733.0" cy="893.4" r="5"/>
<circle cx="739.0" cy="893.4" r="5"/>
<circle cx="744.6" cy="893.4" r="5"/>
<circle cx="744.6" cy="893.4" r="5"/>
<circle cx="758.8" cy="893.4" r="5"/>
<circle cx="763.6" cy="893.4" r="5"/>
<circle cx="763.6" cy="893.4" r="5"/>
<circle cx="770.4" cy="893.4" r="5"/>
<circle cx="788.9" cy="893.4" r="5"/>
<circle cx="788.9" cy="893.4" r="5"/>
<circle cx="795.7" cy="893.4" r="5"/>
<circle cx="813.2" cy="893.4" r="5"/>
<circle cx="819.6" cy="893.4" r="5"/>
<circle cx="826.3" cy="893.4" r="5"/>
<circle cx="863.9" cy="893.4" r="5"/>
<circle cx="869.2" cy="893.4" r="5"/>
<circle cx="882.6" cy="893.4" r="5"/>
<circle cx="932.3" cy="893.4" r="5"/>
<circle cx="427.4" cy="904.4" r="5"/>
<circle cx="657.4" cy="904.4" r="5"/>
<circle cx="688.5" cy="904.4" r="5"/>
<circle cx="694.9" cy="904.4" r="5"/>
<circle cx="694.9" cy="904.4" r="5"/>
<circle cx="720.8" cy="904.4" r="5"/>
<circle cx="726.4" cy="904.4" r="5"/>
<circle cx="733.0" cy="904.4" r="5"/>
<circle cx="739.5" cy="904.4" r="5"/>
<circle cx="751.5" cy="904.4" r="5"/>
<circle cx="813.2" cy="904.4" r="5"/>
<circle cx="826.0" cy="904.4" r="5"/>
<circle cx="831.6" cy="904.4" r="5"/>
<circle cx="844.9" cy="904.4" r="5"/>
<circle cx="844.9" cy="904.4" r="5"/>
<circle cx="876.0" cy="904.4" r="5"/>
<circle cx="876.0" cy="904.4" r="5"/>
<circle cx="882.6" cy="904.4" r="5"/>
<circle cx="888.0" cy="904.4" r="5"/>
<circle cx="906.7" cy="904.4" r="5"/>
<circle cx="920.1" cy="904.4" r="5"/>
<circle cx="932.3" cy="904.4" r="5"/>
<circle cx="502.4" cy="915.5" r="5"/>
<circle cx="596.2" cy="915.5" r="5"/>
<circle cx="614.8" cy="915.5" r="5"/>
<circle cx="614.8" cy="915.5" r="5"/>
<circle cx="633.1" cy="915.5" r="5"/>
<circle cx="639.1" cy="915.5" r="5"/>
<circle cx="650.6" cy="915.5" r="5"/>
<circle cx="657.4" cy="915.5" r="5"/>
<circle cx="688.5" cy="915.5" r="5"/>
<circle cx="688.5" cy="915.5" r="5"/>
<circle cx="694.9" cy="915.5" r="5"/>
<circle cx="707.2" cy="915.5" r="5"/>
<circle cx="707.2" cy="915.5" r="5"/>
<circle cx="714.1" cy="915.5" r="5"/>
<circle cx="739.5" cy="915.5" r="5"/>
<circle cx="744.6" cy="915.5" r="5"/>
<circle cx="744.6" cy="915.5" r="5"/>
<circle cx="751.2" cy="915.5" r="5"/>
<circle cx="751.2" cy="915.5" r="5"/>
<circle cx="757.9" cy="915.5" r="5"/>
<circle cx="757.9" cy="915.5" r="5"/>
<circle cx="763.8" cy="915.5" r="5"/>
<circle cx="770.4" cy="915.5" r="5"/>
<circle cx="800.7" cy="915.5" r="5"/>
<circle cx="807.5" cy="915.5" r="5"/>
<circle cx="819.6" cy="915.5" r="5"/>
<circle cx="819.6" cy="915.5" r="5"/>
<circle cx="863.9" cy="915.5" r="5"/>
<circle cx="863.9" cy="915.5" r="5"/>
<circle cx="869.2" cy="915.5" r="5"/>
<circle cx="925.4" cy="915.5" r="5"/>
<circle cx="932.3" cy="915.5" r="5"/>
<circle cx="944.1" cy="915.5" r="5"/>
<circle cx="962.6" cy="915.5" r="5"/>
<circle cx="969.9" cy="915.5" r="5"/>
<circle cx="315.0" cy="926.5" r="5"/>
<circle cx="477.0" cy="926.5" r="5"/>
<circle cx="526.3" cy="926.5" r="5"/>
<circle cx="588.8" cy="926.5" r="5"/>
<circle cx="620.0" cy="926.5" r="5"/>
<circle cx="639.1" cy="926.5" r="5"/>
<circle cx="688.5" cy="926.5" r="5"/>
<circle cx="694.9" cy="926.5" r="5"/>
<circle cx="744.9" cy="926.5" r="5"/>
<circle cx="782.0" cy="926.5" r="5"/>
<circle cx="782.0" cy="926.5" r="5"/>
<circle cx="788.9" cy="926.5" r="5"/>
<circle cx="813.2" cy="926.5" r="5"/>
<circle cx="813.2" cy="926.5" r="5"/>
<circle cx="820.4" cy="926.5" r="5"/>
<circle cx="913.1" cy="926.5" r="5"/>
<circle cx="913.1" cy="926.5" r="5"/>
<circle cx="920.1" cy="926.5" r="5"/>
<circle cx="932.3" cy="926.5" r="5"/>
<circle cx="963.0" cy="926.5" r="5"/>
<circle cx="452.8" cy="937.6" r="5"/>
<circle cx="551.9" cy="937.6" r="5"/>
<circle cx="551.9" cy="937.6" r="5"/>
<circle cx="558.3" cy="937.6" r="5"/>
<circle cx="633.1" cy="937.6" r="5"/>
<circle cx="639.1" cy="937.6" r="5"/>
<circle cx="657.4" cy="937.6" r="5"/>
<circle cx="701.9" cy="937.6" r="5"/>
<circle cx="707.4" cy="937.6" r="5"/>
<circle cx="725.9" cy="937.6" r="5"/>
<circle cx="739.5" cy="937.6" r="5"/>
<circle cx="739.5" cy="937.6" r="5"/>
<circle cx="751.5" cy="937.6" r="5"/>
<circle cx="751.5" cy="937.6" r="5"/>
<circle cx="769.9" cy="937.6" r="5"/>
<circle cx="776.8" cy="937.6" r="5"/>
<circle cx="800.7" cy="937.6" r="5"/>
<circle cx="807.5" cy="937.6" r="5"/>
<circle cx="813.2" cy="937.6" r="5"/>
<circle cx="819.6" cy="937.6" r="5"/>
<circle cx="819.6" cy="937.6" r="5"/>
<circle cx="826.0" cy="937.6" r="5"/>
<circle cx="826.0" cy="937.6" r="5"/>
<circle cx="831.6" cy="937.6" r="5"/>
<circle cx="857.0" cy="937.6" r="5"/>
<circle cx="863.9" cy="937.6" r="5"/>
<circle cx="888.0" cy="937.6" r="5"/>
<circle cx="906.7" cy="937.6" r="5"/>
<circle cx="514.3" cy="948.6" r="5"/>
<circle cx="521.2" cy="948.6" r="5"/>
<circle cx="570.6" cy="948.6" r="5"/>
<circle cx="577.3" cy="948.6" r="5"/>
<circle cx="596.2" cy="948.6" r="5"/>
<circle cx="669.3" cy="948.6" r="5"/>
<circle cx="682.6" cy="948.6" r="5"/>
<circle cx="682.6" cy="948.6" r="5"/>
<circle cx="688.5" cy="948.6" r="5"/>
<circle cx="707.4" cy="948.6" r="5"/>
<circle cx="720.3" cy="948.6" r="5"/>
<circle cx="725.9" cy="948.6" r="5"/>
<circle cx="725.9" cy="948.6" r="5"/>
<circle cx="733.0" cy="948.6" r="5"/>
<circle cx="733.0" cy="948.6" r="5"/>
<circle cx="739.5" cy="948.6" r="5"/>
<circle cx="739.5" cy="948.6" r="5"/>
<circle cx="776.8" cy="948.6" r="5"/>
<circle cx="801.0" cy="948.6" r="5"/>
<circle cx="813.2" cy="948.6" r="5"/>
<circle cx="813.2" cy="948.6" r="5"/>
<circle cx="826.3" cy="948.6" r="5"/>
<circle cx="844.9" cy="948.6" r="5"/>
<circle cx="850.3" cy="948.6" r="5"/>
<circle cx="857.0" cy="948.6" r="5"/>
<circle cx="876.0" cy="948.6" r="5"/>
<circle cx="882.6" cy="948.6" r="5"/>
<circle cx="906.7" cy="948.6" r="5"/>
<circle cx="925.4" cy="948.6" r="5"/>
<circle cx="1007.1" cy="948.6" r="5"/>
<circle cx="1063.4" cy="948.6" r="5"/>
<circle cx="401.8" cy="959.6" r="5"/>
<circle cx="409.1" cy="959.6" r="5"/>
<circle cx="458.1" cy="959.6" r="5"/>
<circle cx="477.0" cy="959.6" r="5"/>
<circle cx="514.3" cy="959.6" r="5"/>
<circle cx="526.3" cy="959.6" r="5"/>
<circle cx="614.8" cy="959.6" r="5"/>
<circle cx="620.0" cy="959.6" r="5"/>
<circle cx="639.1" cy="959.6" r="5"/>
<circle cx="645.5" cy="959.6" r="5"/>
<circle cx="657.4" cy="959.6" r="5"/>
<circle cx="694.9" cy="959.6" r="5"/>
<circle cx="707.4" cy="959.6" r="5"/>
<circle cx="732.5" cy="959.6" r="5"/>
<circle cx="744.6" cy="959.6" r="5"/>
<circle cx="751.5" cy="959.6" r="5"/>
<circle cx="757.9" cy="959.6" r="5"/>
<circle cx="776.8" cy="959.6" r="5"/>
<circle cx="788.9" cy="959.6" r="5"/>
<circle cx="813.2" cy="959.6" r="5"/>
<circle cx="838.4" cy="959.6" r="5"/>
<circle cx="857.0" cy="959.6" r="5"/>
<circle cx="863.9" cy="959.6" r="5"/>
<circle cx="863.9" cy="959.6" r="5"/>
<circle cx="882.6" cy="959.6" r="5"/>
<circle cx="888.0" cy="959.6" r="5"/>
<circle cx="888.0" cy="959.6" r="5"/>
<circle cx="894.8" cy="959.6" r="5"/>
<circle cx="932.3" cy="959.6" r="5"/>
<circle cx="1100.8" cy="959.6" r="5"/>
<circle cx="340.6" cy="970.7" r="5"/>
<circle cx="401.8" cy="970.7" r="5"/>
<circle cx="507.5" cy="970.7" r="5"/>
<circle cx="601.3" cy="970.7" r="5"/>
<circle cx="639.1" cy="970.7" r="5"/>
<circle cx="682.6" cy="970.7" r="5"/>
<circle cx="682.6" cy="970.7" r="5"/>
<circle cx="688.5" cy="970.7" r="5"/>
<circle cx="720.8" cy="970.7" r="5"/>
<circle cx="732.5" cy="970.7" r="5"/>
<circle cx="739.5" cy="970.7" r="5"/>
<circle cx="751.5" cy="970.7" r="5"/>
<circle cx="776.8" cy="970.7" r="5"/>
<circle cx="788.9" cy="970.7" r="5"/>
<circle cx="807.5" cy="970.7" r="5"/>
<circle cx="813.2" cy="970.7" r="5"/>
<circle cx="857.0" cy="970.7" r="5"/>
<circle cx="882.6" cy="970.7" r="5"/>
<circle cx="901.1" cy="970.7" r="5"/>
<circle cx="901.1" cy="970.7" r="5"/>
<circle cx="906.7" cy="970.7" r="5"/>
<circle cx="920.1" cy="970.7" r="5"/>
<circle cx="925.4" cy="970.7" r="5"/>
</g>
<text x="257.0" y="1149.0" font-size="16" fill="#222" text-anchor="start" dominant-baseline="central"  stroke="#222" stroke-width="0.25">相关系数: -0.034</text>
<text x="1225.0" y="739.0" font-size="12" fill="#6e7079" text-anchor="start" dominant-baseline="central" >占比(%)</text>
<text x="1238.0" y="1085.5" font-size="12" fill="#6e7079" text-anchor="end" dominant-baseline="central" >0</text>
<line x1="1246.3" y1="1039.1" x2="2063.2" y2="1039.1" stroke="#e0e6f1" stroke-width="1" />
<text x="1238.0" y="1039.1" font-size="12" fill="#6e7079" text-anchor="end" dominant-baseline="central" >2</text>
<line x1="1246.3" y1="992.7" x2="2063.2" y2="992.7" stroke="#e0e6f1" stroke-width="1" />
<text x="1238.0" y="992.7" font-size="12" fill="#6e7079" text-anchor="end" dominant-baseline="central" >4</text>
<line x1="1246.3" y1="946.4" x2="2063.2" y2="946.4" stroke="#e0e6f1" stroke-width="1" />
<text x="1238.0" y="946.4" font-size="12" fill="#6e7079" text-anchor="end" dominant-baseline="central" >6</text>
<line x1="1246.3" y1="900.0" x2="2063.2" y2="900.0" stroke="#e0e6f1" stroke-width="1" />
<text x="1238.0" y="900.0" font-size="12" fill="#6e7079" text-anchor="end" dominant-baseline="central" >8</text>
<line x1="1246.3" y1="853.6" x2="2063.2" y2="853.6" stroke="#e0e6f1" stroke-width="1" />
<text x="1238.0" y="853.6" font-size="12" fill="#6e7079" text-anchor="end" dominant-baseline="central" >10</text>
<line x1="1246.3" y1="807.2" x2="2063.2" y2="807.2" stroke="#e0e6f1" stroke-width="1" />
<text x="1238.0" y="807.2" font-size="12" fill="#6e7079" text-anchor="end" dominant-baseline="central" >12</text>
<line x1="1246.3" y1="760.8" x2="2063.2" y2="760.8" stroke="#e0e6f1" stroke-width="1" />
<text x="1238.0" y="760.8" font-size="12" fill="#6e7079" text-anchor="end" dominant-baseline="central" >14</text>
<rect x="1258.9" y="893.0" width="56.4" height="192.5" fill="#4b63b8"/>
<text x="1287.1" y="882.5" font-size="12" fill="#333" text-anchor="middle" dominant-baseline="central" >8.30 %</text>
<text x="1287.1" y="1099.5" font-size="12" fill="#6e7079" text-anchor="middle" dominant-baseline="central" >24.90</text>
<rect x="1340.6" y="836.7" width="56.4" height="248.8" fill="#4b63b8"/>
<text x="1368.8" y="826.2" font-size="12" fill="#333" text-anchor="middle" dominant-baseline="central" >10.73 %</text>
<text x="1368.8" y="1099.5" font-size="12" fill="#6e7079" text-anchor="middle" dominant-baseline="central" >25.01</text>
<rect x="1422.3" y="836.7" width="56.4" height="248.8" fill="#4b63b8"/>
<text x="1450.5" y="826.2" font-size="12" fill="#333" text-anchor="middle" dominant-baseline="central" >10.73 %</text>
<text x="1450.5" y="1099.5" font-size="12" fill="#6e7079" text-anchor="middle" dominant-baseline="central" >25.12</text>
<rect x="1504.0" y="860.8" width="56.4" height="224.7" fill="#4b63b8"/>
<text x="1532.2" y="850.3" font-size="12" fill="#333" text-anchor="middle" dominant-baseline="central" >9.69 %</text>
<text x="1532.2" y="1099.5" font-size="12" fill="#6e7079" text-anchor="middle" dominant-baseline="central" >25.23</text>
<rect x="1585.7" y="925.0" width="56.4" height="160.5" fill="#4b63b8"/>
<text x="1613.9" y="914.5" font-size="12" fill="#333" text-anchor="middle" dominant-baseline="central" >6.92 %</text>
<text x="1613.9" y="1099.5" font-size="12" fill="#6e7079" text-anchor="middle" dominant-baseline="central" >25.34</text>
<rect x="1667.4" y="796.6" width="56.4" height="288.9" fill="#4b63b8"/>
<text x="1695.6" y="786.1" font-size="12" fill="#333" text-anchor="middle" dominant-baseline="central" >12.46 %</text>
<text x="1695.6" y="1099.5" font-size="12" fill="#6e7079" text-anchor="middle" dominant-baseline="central" >25.45</text>
<rect x="1749.1" y="909.0" width="56.4" height="176.5" fill="#4b63b8"/>
<text x="1777.3" y="898.5" font-size="12" fill="#333" text-anchor="middle" dominant-baseline="central" >7.61 %</text>
<text x="1777.3" y="1099.5" font-size="12" fill="#6e7079" text-anchor="middle" dominant-baseline="central" >25.56</text>
<rect x="1830.8" y="836.7" width="56.4" height="248.8" fill="#4b63b8"/>
<text x="1859.0" y="826.2" font-size="12" fill="#333" text-anchor="middle" dominant-baseline="central" >10.73 %</text>
<text x="1859.0" y="1099.5" font-size="12" fill="#6e7079" text-anchor="middle" dominant-baseline="central" >25.67</text>
<rect x="1912.5" y="844.8" width="56.4" height="240.7" fill="#4b63b8"/>
<text x="1940.7" y="834.3" font-size="12" fill="#333" text-anchor="middle" dominant-baseline="central" >10.38 %</text>
<text x="1940.7" y="1099.5" font-size="12" fill="#6e7079" text-anchor="middle" dominant-baseline="central" >25.78</text>
<rect x="1994.2" y="796.6" width="56.4" height="288.9" fill="#4b63b8"/>
<text x="2022.4" y="786.1" font-size="12" fill="#333" text-anchor="middle" dominant-baseline="central" >12.46 %</text>
<text x="2022.4" y="1099.5" font-size="12" fill="#6e7079" text-anchor="middle" dominant-baseline="central" >25.89</text>
<line x1="1246.3" y1="1085.5" x2="2063.2" y2="1085.5" stroke="#6e7079" stroke-width="1" />
<line x1="1246.3" y1="1085.0" x2="1246.3" y2="1090.0" stroke="#6e7079" stroke-width="1" />
<line x1="1328.0" y1="1085.0" x2="1328.0" y2="1090.0" stroke="#6e7079" stroke-width="1" />
<line x1="1409.7" y1="1085.0" x2="1409.7" y2="1090.0" stroke="#6e7079" stroke-width="1" />
<line x1="1491.4" y1="1085.0" x2="1491.4" y2="1090.0" stroke="#6e7079" stroke-width="1" />
<line x1="1573.1" y1="1085.0" x2="1573.1" y2="1090.0" stroke="#6e7079" stroke-width="1" />
<line x1="1654.8" y1="1085.0" x2="1654.8" y2="1090.0" stroke="#6e7079" stroke-width="1" />
<line x1="1736.4" y1="1085.0" x2="1736.4" y2="1090.0" stroke="#6e7079" stroke-width="1" />
<line x1="1818.1" y1="1085.0" x2="1818.1" y2="1090.0" stroke="#6e7079" stroke-width="1" />
<line x1="1899.8" y1="1085.0" x2="1899.8" y2="1090.0" stroke="#6e7079" stroke-width="1" />
<line x1="1981.5" y1="1085.0" x2="1981.5" y2="1090.0" stroke="#6e7079" stroke-width="1" />
<line x1="2063.2" y1="1085.0" x2="2063.2" y2="1090.0" stroke="#6e7079" stroke-width="1" />
<clipPath id="cpx"><rect x="2070" y="1070" width="29" height="30"/></clipPath><g clip-path="url(#cpx)">
<text x="2078.0" y="1084.8" font-size="12" fill="#6e7079" text-anchor="start" dominant-baseline="central" >瞬时气温(℃)</text>
</g>
<text x="1199.0" y="1135.0" font-size="16" fill="#222" text-anchor="start" dominant-baseline="central"  stroke="#222" stroke-width="0.25">均值: 25.46, 标准差: 0.29</text>
</svg>
<div style="position:absolute;left:0;top:0;width:2188px;height:1187px;overflow:hidden"><div style="position:absolute;left:815px;top:1200px;width:935px;height:60px;border-radius:30px;box-shadow:0 0 45px 6px rgba(0,0,0,0.10)"></div>
</div>
</body></html>
